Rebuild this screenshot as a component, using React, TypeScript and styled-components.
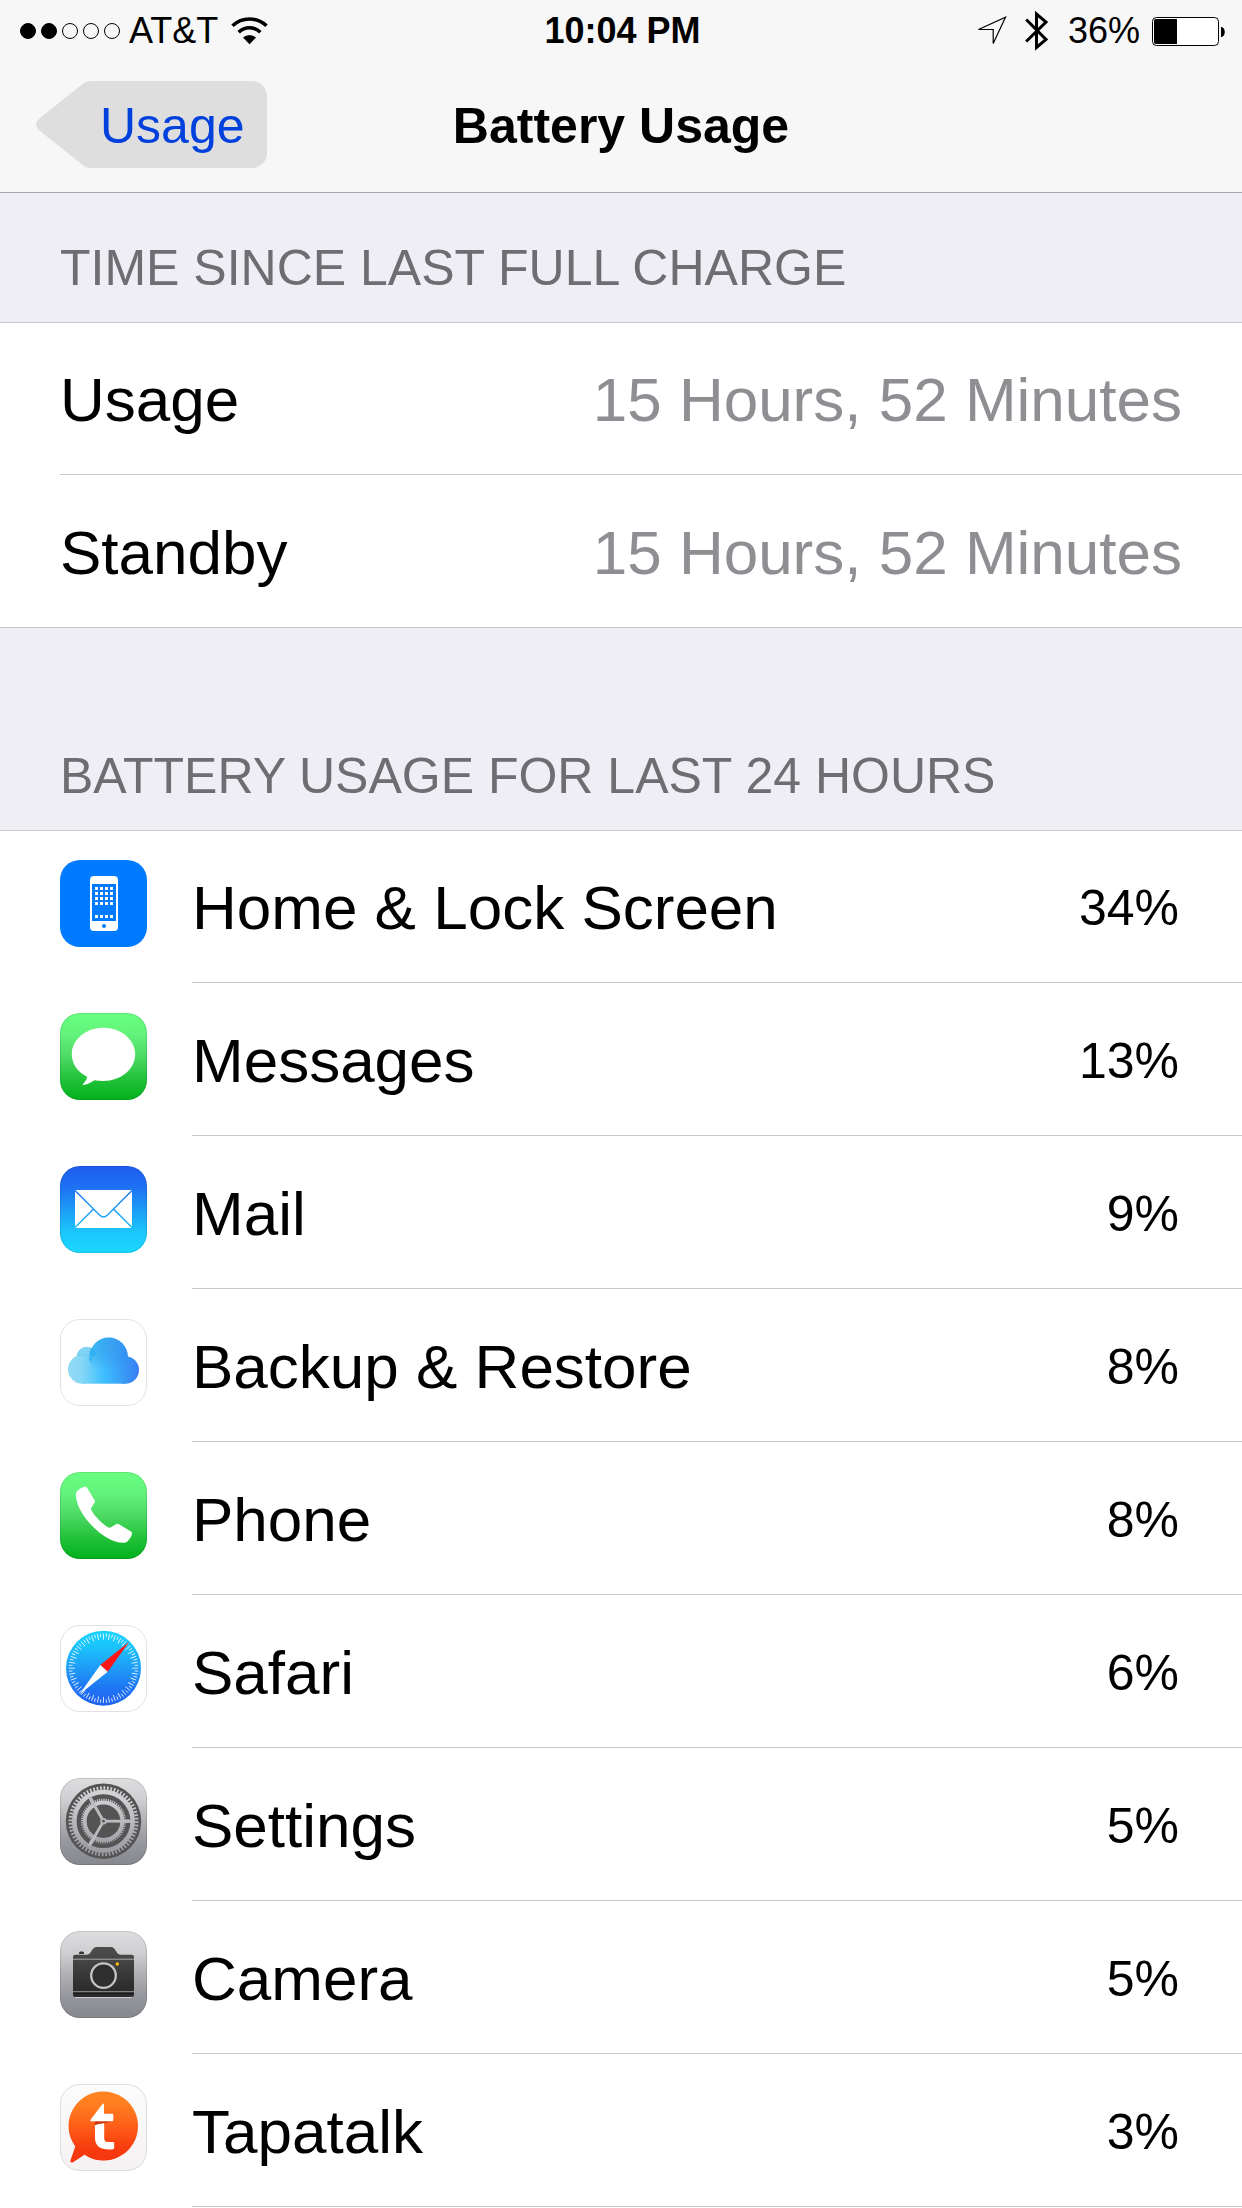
import React from "react";
import styled, { createGlobalStyle } from "styled-components";

const GlobalStyle = createGlobalStyle`
  *, *::before, *::after { box-sizing: border-box; }
  body {
    margin: 0;
    background: #ffffff;
    color: #000000;
    font-family: "Liberation Sans", Helvetica, Arial, sans-serif;
  }
`;

const Page = styled.div`
  min-height: 100vh;
`;

const TopBar = styled.header`
  background: #f7f7f7;
  border-bottom: 1px solid #a7a7aa;
`;

const StatusBar = styled.div`
  display: grid;
  grid-template-columns: 1fr auto 1fr;
  align-items: center;
  height: 62px;
  padding: 0 17px 0 20px;
  font-size: 36px;
  line-height: 42px;
`;

const StatusGroup = styled.div<{ $end?: boolean }>`
  display: flex;
  align-items: center;
  justify-content: ${(p) => (p.$end ? "flex-end" : "flex-start")};
  gap: ${(p) => (p.$end ? "12px" : "9px")};
`;

const Signal = styled.div`
  display: flex;
  gap: 5px;
`;

const SignalDot = styled.span<{ $filled: boolean }>`
  width: 16px;
  height: 16px;
  border: 1px solid #000000;
  border-radius: 50%;
  background: ${(p) => (p.$filled ? "#000000" : "transparent")};
`;

const Carrier = styled.span`
  margin-right: 4px;
`;

const Clock = styled.time`
  font-size: 36px;
  font-weight: 700;
`;

const Radios = styled.span`
  display: flex;
  align-items: center;
  gap: 18px;
  margin-right: 7px;
`;

const NavBar = styled.nav`
  display: grid;
  grid-template-columns: 1fr auto 1fr;
  padding: 19px 36px 24px;
`;

const BackButton = styled.button`
  justify-self: start;
  display: flex;
  height: 87px;
  padding: 0;
  border: 0;
  background: none;
  color: #0040dd;
  font: inherit;
  font-size: 50px;
  line-height: 91px;
  cursor: pointer;
`;

const BackLabel = styled.span`
  height: 87px;
  padding: 0 22px 0 2px;
  border-radius: 0 15px 15px 0;
  background: #dedede;
`;

const Title = styled.h1`
  margin: 0;
  font-size: 50px;
  line-height: 91px;
  height: 87px;
`;

const SectionTitle = styled.h2<{ $spaced?: boolean }>`
  margin: 0;
  padding: ${(p) => (p.$spaced ? "118px" : "45px")} 60px 24px;
  background: #efeef4;
  color: #6d6d72;
  font-size: 50px;
  font-weight: 400;
  line-height: 60px;
`;

const List = styled.ul`
  margin: 0;
  padding: 0;
  list-style: none;
  background: #ffffff;
  box-shadow: inset 0 1px 0 #c8c7cc;
`;

const Row = styled.li`
  display: flex;
  gap: 45px;
  padding-left: 60px;

  &:last-child {
    box-shadow: inset 0 -1px 0 #c8c7cc;
  }
`;

const AppRow = styled(Row)`
  &:last-child {
    box-shadow: none;
  }
`;

const RowBody = styled.div`
  flex: 1;
  display: flex;
  align-items: center;
  justify-content: space-between;
  height: 153px;
  padding: 4px 60px 0 0;
  border-bottom: 1px solid #c8c7cc;
`;

const Label = styled.span`
  font-size: 62px;
  line-height: 72px;
`;

const Detail = styled(Label)`
  color: #8e8e93;
`;

const Percent = styled.span`
  padding-right: 3px;
  font-size: 50px;
  line-height: 60px;
`;

const AppIcon = styled.svg`
  flex: none;
  width: 87px;
  height: 87px;
  margin-top: 30px;
`;

function WifiIcon() {
  return (
    <svg width="37" height="28" viewBox="0 0 37 28" aria-label="Wi-Fi">
      <path d="M1.500 8.800a24.500 24.500 0 0 1 34 0" fill="none" stroke="#000" strokeWidth="3.600" />
      <path d="M7.700 15.200a15.500 15.500 0 0 1 21.600 0" fill="none" stroke="#000" strokeWidth="3.600" />
      <path d="M12 20.600a9.600 9.600 0 0 1 13 0L18.500 27.200z" />
    </svg>
  );
}

function LocationIcon() {
  return (
    <svg width="30" height="30" viewBox="0 0 30 30" aria-label="Location">
      <path d="M1.500 13.500L28.500 1.200L16.200 27.500V13.500z" fill="none" stroke="#000" strokeWidth="1.200" />
    </svg>
  );
}

function BluetoothIcon() {
  return (
    <svg width="24" height="42" viewBox="0 0 24 42" aria-label="Bluetooth">
      <path d="M1.200 9.500L21 29.500L11.500 37.500V4L21 12L1.200 31.500" fill="none" stroke="#000" strokeWidth="3" />
    </svg>
  );
}

function BatteryIcon() {
  return (
    <svg width="73" height="29" viewBox="0 0 73 29" aria-label="Battery">
      <rect x="0.500" y="0.500" width="66" height="28" rx="4" fill="#fff" stroke="#000" />
      <path d="M4 2h21v25H4a2 2 0 0 1-2-2V4a2 2 0 0 1 2-2z" />
      <path d="M69 10c5 0 5 10 0 10z" />
    </svg>
  );
}

function Gradient({ id, stops, horizontal }: { id: string; stops: string[]; horizontal?: boolean }) {
  return (
    <linearGradient
      id={id}
      gradientUnits="userSpaceOnUse"
      x1="0"
      y1="0"
      x2={horizontal ? 87 : 0}
      y2={horizontal ? 0 : 87}
    >
      {stops.map((color, i) => (
        <stop key={color} offset={i / (stops.length - 1)} stopColor={color} />
      ))}
    </linearGradient>
  );
}

function Tile({ fill, edge }: { fill: string; edge?: string }) {
  return (
    <>
      <rect width="87" height="87" rx="20" fill={fill} />
      {edge && <rect x="0.500" y="0.500" width="86" height="86" rx="19.500" fill="none" stroke={edge} />}
    </>
  );
}

const greens = ["#69ff83", "#63f27b", "#4cd964", "#24c33b", "#00b01c"];

function HomeIcon() {
  return (
    <AppIcon viewBox="0 0 87 87" aria-hidden="true">
      <Tile fill="#007aff" />
      <rect x="30" y="16" width="28" height="55" rx="4" fill="#fff" />
      <rect x="32" y="24" width="24" height="37" fill="#007aff" />
      {[27, 32, 37, 42, 55].map((y) =>
        [35, 40, 45, 50].map((x) => <rect key={`${x}-${y}`} x={x} y={y} width="3" height="3" fill="#fff" />)
      )}
      <circle cx="44" cy="66" r="2" fill="#007aff" />
    </AppIcon>
  );
}

function MessagesIcon() {
  return (
    <AppIcon viewBox="0 0 87 87" aria-hidden="true">
      <Gradient id="messages" stops={greens} />
      <Tile fill="url(#messages)" edge="rgba(0,0,0,0.1)" />
      <path
        fill="#fff"
        d="M43.500 14.700C61 14.700 75.200 26.500 75.200 41.300S61 68 43.500 68Q38.500 68 34.500 67.200C32 68.500 28 71.500 23.200 72C22.500 72 22.800 71.300 23.500 70.500C25.500 68.500 27 66 27 63.800C17.500 59 11.800 50.800 11.800 41.300C11.800 26.500 26 14.700 43.500 14.700z"
      />
    </AppIcon>
  );
}

function MailIcon() {
  return (
    <AppIcon viewBox="0 0 87 87" aria-hidden="true">
      <Gradient id="mail" stops={["#1d5cf0", "#1e72f2", "#1d9bf6", "#1bc5fc", "#1ad8fe"]} />
      <Tile fill="url(#mail)" edge="rgba(0,0,0,0.1)" />
      <rect x="15" y="24" width="57" height="38" fill="#fff" />
      <path
        d="M15 24.500L39.500 49Q43.500 53 47.500 49L72 24.500M15 61.500L33.500 43M72 61.500L53.500 43"
        fill="none"
        stroke="url(#mail)"
        strokeWidth="1.500"
      />
    </AppIcon>
  );
}

function CloudIcon() {
  return (
    <AppIcon viewBox="0 0 87 87" aria-hidden="true">
      <Gradient id="cloud" horizontal stops={["#9bdcf3", "#86d7f6", "#3fbfff", "#3798f4", "#3b6df5"]} />
      <linearGradient id="cloudTop" x1="0" y1="0.300" x2="1" y2="0.600">
        <stop offset="0" stopColor="#35b6f2" />
        <stop offset="0.500" stopColor="#3b9ff0" />
        <stop offset="1" stopColor="#348cf3" />
      </linearGradient>
      <linearGradient id="cloudFade" x1="0" y1="0" x2="0" y2="1">
        <stop offset="0" stopColor="#fff" />
        <stop offset="0.450" stopColor="#fff" stopOpacity="0.700" />
        <stop offset="0.850" stopColor="#fff" stopOpacity="0" />
      </linearGradient>
      <mask id="cloudMask">
        <circle cx="48.700" cy="37.800" r="19.200" fill="url(#cloudFade)" />
      </mask>
      <Tile fill="#fff" edge="#e2e2e4" />
      <circle cx="26.700" cy="37.900" r="10.200" fill="#7fd3f3" />
      <g fill="url(#cloud)">
        <circle cx="22.500" cy="50.200" r="14.500" />
        <circle cx="48.700" cy="37.800" r="19.200" />
        <circle cx="65.300" cy="51" r="13.700" />
        <rect x="22.500" y="46" width="43" height="18.700" />
      </g>
      <circle cx="48.700" cy="37.800" r="19.200" fill="url(#cloudTop)" mask="url(#cloudMask)" />
      <path d="M31 29A10.200 10.200 0 0 1 36.500 35Q32 38 30 44A20 20 0 0 1 31 29z" fill="#25aef0" opacity="0.600" />
      <path d="M18 36.500Q26 34 34 40" fill="none" stroke="#65c8f0" strokeWidth="1" opacity="0.700" />
    </AppIcon>
  );
}

function PhoneIcon() {
  return (
    <AppIcon viewBox="0 0 87 87" aria-hidden="true">
      <Gradient id="phone" stops={greens} />
      <Tile fill="url(#phone)" edge="rgba(0,0,0,0.1)" />
      <path
        fill="#fff"
        d="M16 22C16 19 21 15.500 24.500 14.800C25.800 14.500 26.500 15 27.200 16L34.500 28C35.300 29.300 35 30.200 34 31.500L31.500 35.500C30.800 36.800 30.800 37.500 31.500 38.500C36 46 42 51.500 48 55.300C49 56 50 55.800 51 55.300L55.500 52.400C57 51.500 57.800 51.500 59 52.200L71 59.500C72 60.200 72.300 61 71.900 62.200C70.800 66 67.500 70.500 64.500 70.800C45 72 15 42 16 22z"
      />
    </AppIcon>
  );
}

function SafariIcon() {
  return (
    <AppIcon viewBox="0 0 87 87" aria-hidden="true">
      <Gradient id="safari" stops={["#19d7ff", "#1bc4fb", "#1e9bf6", "#1f72f3", "#1e5cef"]} />
      <Tile fill="#fff" edge="#e2e2e4" />
      <circle cx="43.500" cy="43.200" r="37.500" fill="url(#safari)" />
      {Array.from({ length: 72 }, (_, i) => (
        <path
          key={i}
          d={i % 2 ? "M43.500 8.400v3.600" : "M43.500 8.400v6.200"}
          stroke="#fff"
          strokeWidth="0.900"
          opacity="0.850"
          transform={`rotate(${i * 5} 43.500 43.200)`}
        />
      ))}
      <path d="M69.300 16.700L47.700 46.700L40.300 40z" fill="#ff1515" />
      <path d="M19.300 69.500L47.700 46.700L40.300 40z" fill="#fff" />
    </AppIcon>
  );
}

function SettingsIcon() {
  return (
    <AppIcon viewBox="0 0 87 87" aria-hidden="true">
      <Gradient id="settings" stops={["#dddee0", "#cfcfd2", "#b1b1b5", "#96979c", "#86888d"]} />
      <Gradient id="gearMetal" stops={["#d9dadc", "#cdced1", "#b8b9bd", "#a2a3a8", "#929398"]} />
      <Tile fill="url(#settings)" edge="rgba(0,0,0,0.12)" />
      <circle cx="43.500" cy="43.200" r="37.700" fill="#545454" />
      <g fill="none" stroke="url(#gearMetal)">
        <circle cx="43.500" cy="43.200" r="29.200" strokeWidth="4.600" />
        <circle cx="43.500" cy="43.200" r="33" strokeWidth="4" pathLength="120" strokeDasharray="1 1" />
        <circle cx="43.500" cy="43.200" r="18.800" strokeWidth="4" />
        <circle cx="43.500" cy="43.200" r="21.500" strokeWidth="2.200" pathLength="120" strokeDasharray="1 1" />
      </g>
      {[0, 120, 240].map((angle) => (
        <g key={angle} transform={`rotate(${angle} 43.500 43.200)`}>
          <path d="M46 41.800H72V44.600H46z" fill="#bbbcc0" />
          <path d="M65 41.500H69.500V45H65z" fill="#bbbcc0" />
        </g>
      ))}
      <circle cx="43.500" cy="43.200" r="3.200" fill="#b8b9bd" />
      <circle cx="43.500" cy="43.200" r="1.400" fill="#545454" />
    </AppIcon>
  );
}

function CameraIcon() {
  return (
    <AppIcon viewBox="0 0 87 87" aria-hidden="true">
      <Gradient id="camera" stops={["#dddee0", "#cfcfd2", "#b1b1b5", "#96979c", "#86888d"]} />
      <Gradient id="cameraBody" stops={["#555", "#454545", "#2c2c2c", "#262626"]} />
      <Tile fill="url(#camera)" edge="rgba(0,0,0,0.12)" />
      <path d="M19 23v-1q0-1.500 1.500-1.500h2q1.500 0 1.500 1.500v1z" fill="#333" />
      <path d="M15 66.500H72" stroke="#d0d0d3" strokeWidth="1" />
      <path
        fill="url(#cameraBody)"
        d="M13 26Q13 23.700 15.300 23.700H27C32 23.700 31 16 37 16H50.500C56.500 16 55.500 23.700 60.500 23.700H71.700Q74 23.700 74 26V63.500Q74 66 71.700 66H15.300Q13 66 13 63.500z"
      />
      <path d="M13 28.200H74M13 60.800H74" stroke="#a9a9ab" strokeWidth="1" />
      <path d="M13 62.200H74" stroke="#111" strokeWidth="1" />
      <circle cx="43.500" cy="44.600" r="12.300" fill="#2e2e2e" stroke="#c4c4c8" strokeWidth="2.300" />
      <circle cx="57.300" cy="33" r="1.700" fill="#ffc20a" />
    </AppIcon>
  );
}

function TapatalkIcon() {
  return (
    <AppIcon viewBox="0 0 87 87" aria-hidden="true">
      <Gradient id="paper" stops={["#fcfcfd", "#f5f2f2"]} />
      <Gradient id="flame" stops={["#ff8a22", "#ff7c20", "#fd5c18", "#f63a0e", "#f4330c"]} />
      <Tile fill="url(#paper)" edge="#dfdddd" />
      <path
        fill="url(#flame)"
        d="M43.500 7.500A34.500 34.500 0 1 1 24.500 70.800L13 78.300C11 79.200 10 78 10.600 76L15.300 62.500A34.500 34.500 0 0 1 43.500 7.500z"
      />
      <path d="M35 37.200H52L44 39.500L35 41z" fill="#c9340d" />
      <path
        fill="#fff"
        d="M42.300 20.200C43.200 19 44 19.300 44 20.600V29.700H52Q53.300 29.700 53.300 31V36Q53.300 37.200 52 37.200H31C30 37.200 30 36.300 30.500 35.700zM35 41.300Q38 40 44.200 39.300V54Q44.200 58 47.500 58H53Q54.200 58 54.200 59.200V63.500Q54.200 65 53 65.200C42 66.500 35 63 35 54z"
      />
    </AppIcon>
  );
}

const charge = [
  { name: "Usage", time: "15 Hours, 52 Minutes" },
  { name: "Standby", time: "15 Hours, 52 Minutes" },
];

const apps = [
  { name: "Home & Lock Screen", share: 34, Icon: HomeIcon },
  { name: "Messages", share: 13, Icon: MessagesIcon },
  { name: "Mail", share: 9, Icon: MailIcon },
  { name: "Backup & Restore", share: 8, Icon: CloudIcon },
  { name: "Phone", share: 8, Icon: PhoneIcon },
  { name: "Safari", share: 6, Icon: SafariIcon },
  { name: "Settings", share: 5, Icon: SettingsIcon },
  { name: "Camera", share: 5, Icon: CameraIcon },
  { name: "Tapatalk", share: 3, Icon: TapatalkIcon },
];

export default function App() {
  return (
    <Page>
      <GlobalStyle />
      <TopBar>
        <StatusBar>
          <StatusGroup>
            <Signal>
              {[1, 2, 3, 4, 5].map((bar) => (
                <SignalDot key={bar} $filled={bar <= 2} />
              ))}
            </Signal>
            <Carrier>AT&amp;T</Carrier>
            <WifiIcon />
          </StatusGroup>
          <Clock>10:04 PM</Clock>
          <StatusGroup $end>
            <Radios>
              <LocationIcon />
              <BluetoothIcon />
            </Radios>
            <span>36%</span>
            <BatteryIcon />
          </StatusGroup>
        </StatusBar>
        <NavBar>
          <BackButton type="button">
            <svg width="62" height="87" viewBox="0 0 62 87" aria-hidden="true">
              <path d="M62 0H56Q50 0 46 3.500L4 37Q-4 43.500 4 50L46 83.500Q50 87 56 87H62z" fill="#dedede" />
            </svg>
            <BackLabel>Usage</BackLabel>
          </BackButton>
          <Title>Battery Usage</Title>
        </NavBar>
      </TopBar>
      <main>
        <SectionTitle>TIME SINCE LAST FULL CHARGE</SectionTitle>
        <List>
          {charge.map(({ name, time }) => (
            <Row key={name}>
              <RowBody>
                <Label>{name}</Label>
                <Detail>{time}</Detail>
              </RowBody>
            </Row>
          ))}
        </List>
        <SectionTitle $spaced>BATTERY USAGE FOR LAST 24 HOURS</SectionTitle>
        <List>
          {apps.map(({ name, share, Icon }) => (
            <AppRow key={name}>
              <Icon />
              <RowBody>
                <Label>{name}</Label>
                <Percent>{share}%</Percent>
              </RowBody>
            </AppRow>
          ))}
        </List>
      </main>
    </Page>
  );
}
